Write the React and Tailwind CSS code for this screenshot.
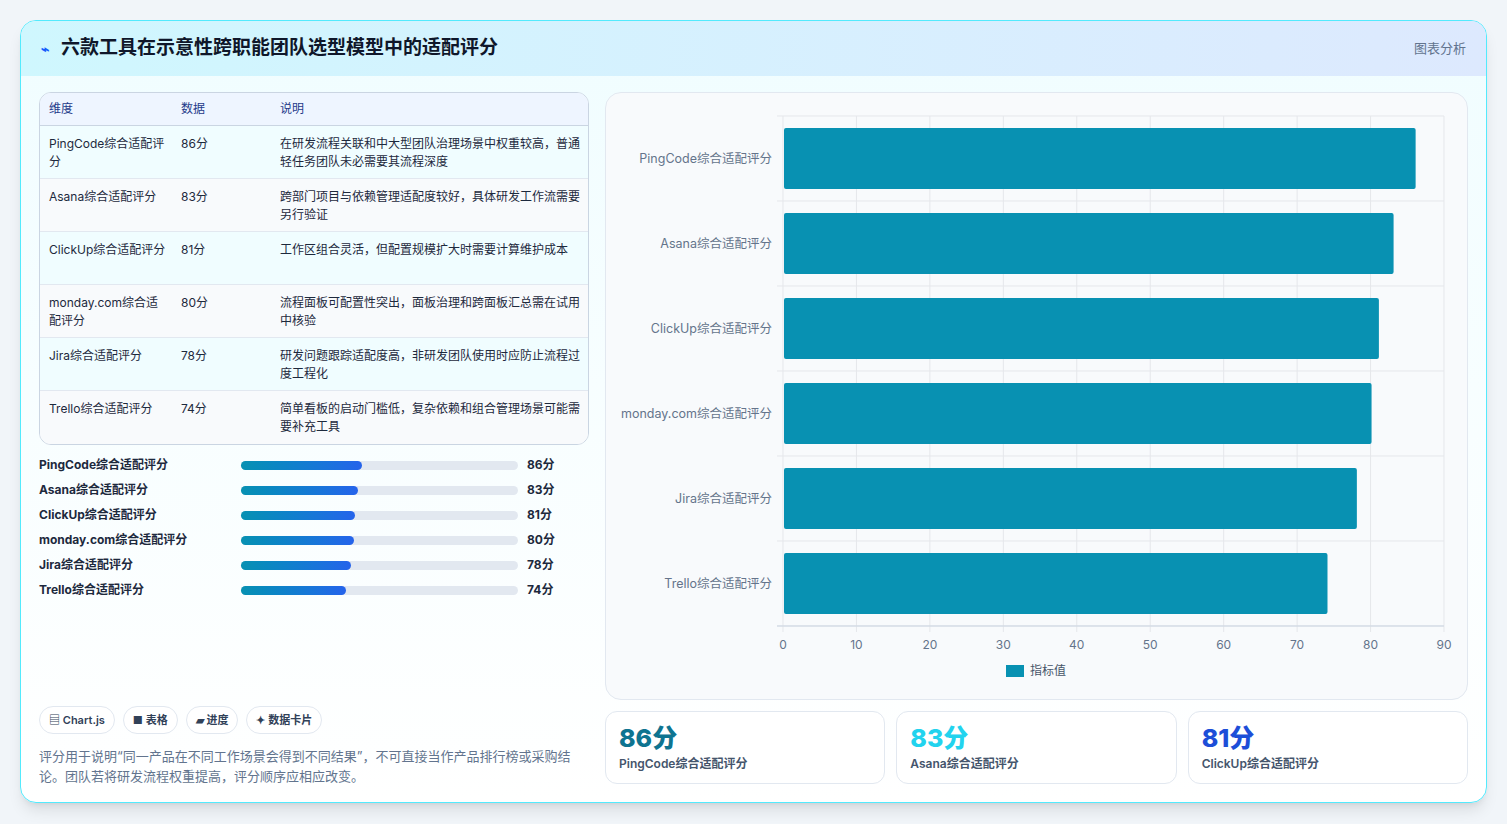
const rows = [
  ["PingCode综合适配评分", 86, "在研发流程关联和中大型团队治理场景中权重较高，普通轻任务团队未必需要其流程深度"],
  ["Asana综合适配评分", 83, "跨部门项目与依赖管理适配度较好，具体研发工作流需要另行验证"],
  ["ClickUp综合适配评分", 81, "工作区组合灵活，但配置规模扩大时需要计算维护成本"],
  ["monday.com综合适配评分", 80, "流程面板可配置性突出，面板治理和跨面板汇总需在试用中核验"],
  ["Jira综合适配评分", 78, "研发问题跟踪适配度高，非研发团队使用时应防止流程过度工程化"],
  ["Trello综合适配评分", 74, "简单看板的启动门槛低，复杂依赖和组合管理场景可能需要补充工具"],
];
const F = { fontFamily: "Inter, 'Noto Sans CJK SC', sans-serif" };

function Chart() {
  const x0 = 177, w = 661, top = 23, band = 85;
  return (
    <svg width="861" height="607" className="block">
      {Array.from({ length: 10 }, (_, i) => {
        const x = x0 + (w * i) / 9;
        return (
          <g key={i}>
            <line x1={x} x2={x} y1={top} y2={top + band * 6 + 6} stroke="#e5e7eb" />
            <text x={x} y={556} textAnchor="middle" fontSize="12" fill="#64748b">{i * 10}</text>
          </g>
        );
      })}
      {Array.from({ length: 7 }, (_, i) => (
        <line key={i} x1={x0 - 6} x2={x0 + w} y1={top + band * i} y2={top + band * i} stroke="#e5e7eb" />
      ))}
      <line x1={x0 - 6} x2={x0 + w} y1={top + band * 6} y2={top + band * 6} stroke="#cbd5e1" />
      {rows.map((r, i) => (
        <g key={r[0]}>
          <text x={x0 - 11} y={top + band * i + 47} textAnchor="end" fontSize="12.5" fill="#64748b">{r[0]}</text>
          <rect x={x0 + 1} y={top + band * i + 12} width={(w * r[1]) / 90} height="61" rx="2" fill="#0891b2" />
        </g>
      ))}
      <rect x="400" y="572" width="18" height="12" fill="#0891b2" />
      <text x="424" y="582" fontSize="12" fill="#475569">指标值</text>
    </svg>
  );
}

export default function App() {
  return (
    <div style={F} className="w-[1507px] h-[824px] bg-[#f1f5f9] p-[20px] pb-[20px]">
      <div className="h-[783px] w-[1467px] rounded-2xl border border-cyan-300 bg-gradient-to-b from-[#f0fdff] to-white shadow-lg overflow-hidden flex flex-col">
        <header className="h-[55px] shrink-0 flex items-center justify-between px-5 bg-gradient-to-r from-[#cff7fe] to-[#dde9fe]">
          <h1 className="flex items-center gap-3 text-[19px] font-bold text-[#0f172a]">
            <span className="text-blue-600 text-sm">⌁</span>六款工具在示意性跨职能团队选型模型中的适配评分
          </h1>
          <span className="text-[13px] text-slate-500">图表分析</span>
        </header>
        <div className="flex gap-4 px-[18px] pt-4 flex-1">
          <div className="w-[552px] flex flex-col">
            <div className="rounded-xl border border-slate-300 overflow-hidden bg-white text-[12px] text-slate-800">
              <div className="flex h-[33px] items-center bg-[#eef5ff] text-[#1e3a8a] border-b border-slate-300">
                <span className="w-[141px] pl-[9px]">维度</span><span className="w-[99px]">数据</span><span>说明</span>
              </div>
              {rows.map((r, i) => (
                <div key={r[0]} className={`flex h-[53px] pt-[9px] leading-[18px] ${i < 5 ? "border-b border-slate-200" : ""} ${i % 2 ? "bg-[#f8fafc]" : "bg-[#f0fdff]"}`}>
                  <span className="w-[141px] pl-[9px] pr-3">{r[0]}</span>
                  <span className="w-[99px]">{r[1]}分</span>
                  <span className="w-[302px]">{r[2]}</span>
                </div>
              ))}
            </div>
            <div className="mt-[11px] flex flex-col gap-[7px]">
              {rows.map((r) => (
                <div key={r[0]} className="flex items-center h-[18px] text-[12px] font-bold text-slate-800">
                  <span className="w-[202px]">{r[0]}</span>
                  <div className="w-[277px] h-[9px] rounded-full bg-slate-200">
                    <div className="h-full rounded-full bg-gradient-to-r from-[#0891b2] to-[#2563eb]" style={{ width: `${r[1] * 0.51}%` }} />
                  </div>
                  <span className="ml-[9px]">{r[1]}分</span>
                </div>
              ))}
            </div>
            <div className="mt-auto mb-[16px]">
              <div className="flex gap-2 text-[11px] font-semibold text-slate-700 mb-3">
                {["▤ Chart.js", "■ 表格", "▰ 进度", "✦ 数据卡片"].map((t) => (
                  <span key={t} className="px-[9px] h-[28px] flex items-center rounded-full border border-slate-200 bg-white">{t}</span>
                ))}
              </div>
              <p className="text-[13px] leading-[20px] text-slate-500">评分用于说明“同一产品在不同工作场景会得到不同结果”，不可直接当作产品排行榜或采购结论。团队若将研发流程权重提高，评分顺序应相应改变。</p>
            </div>
          </div>
          <div className="flex-1 flex flex-col gap-[11px]">
            <div className="h-[608px] rounded-2xl border border-slate-200 bg-[#f8fafc] overflow-hidden">
              <Chart />
            </div>
            <div className="grid grid-cols-3 gap-[11px]">
              {[["86分", "text-[#0e7490]", rows[0][0]], ["83分", "text-[#22d3ee]", rows[1][0]], ["81分", "text-[#1d4ed8]", rows[2][0]]].map(([v, c, l]) => (
                <div key={l} className="h-[73px] rounded-xl border border-slate-200 bg-white px-[13px] pt-[9px]">
                  <div className={`text-[25px] font-extrabold leading-[34px] ${c}`}>{v}</div>
                  <div className="text-[12px] font-semibold text-slate-600">{l}</div>
                </div>
              ))}
            </div>
          </div>
        </div>
      </div>
    </div>
  );
}
